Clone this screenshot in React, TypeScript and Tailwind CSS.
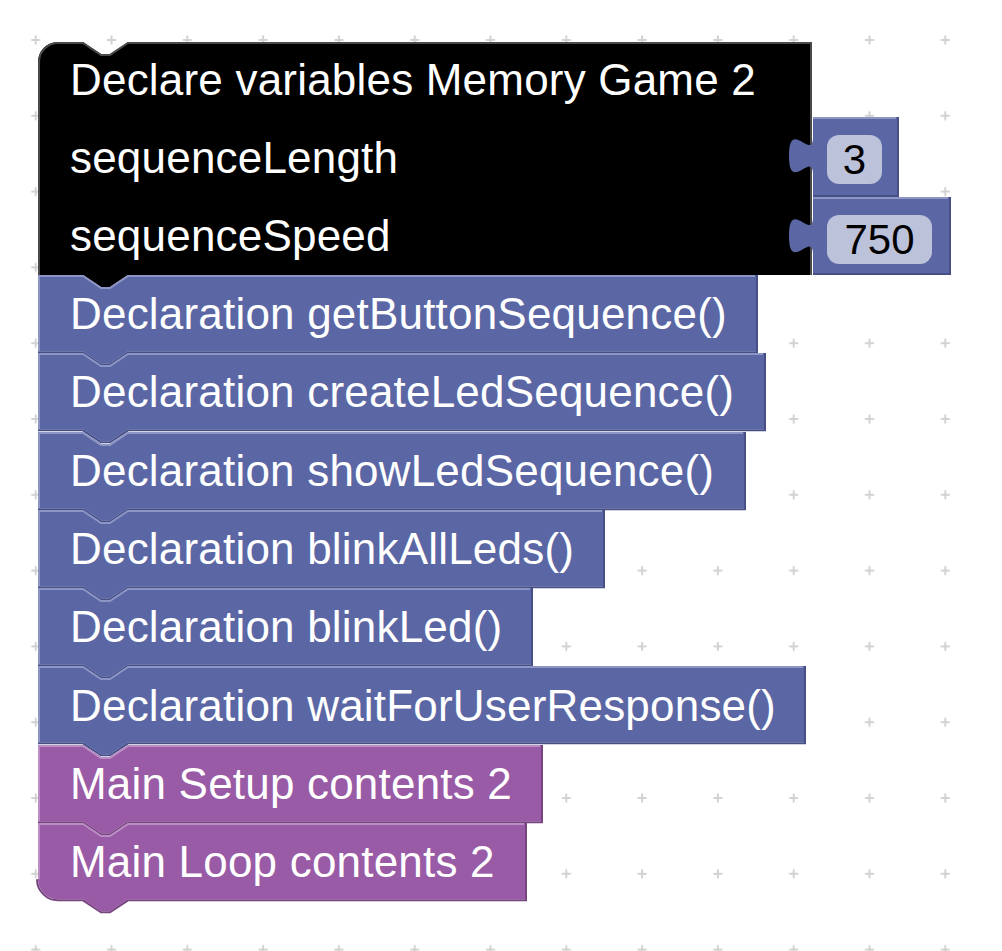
type Palette = { fill: string; light: string; dark: string };

const BLUE: Palette = { fill: "#5b67a5", light: "#8d95c4", dark: "#464f86" };
const PURPLE: Palette = { fill: "#995ba5", light: "#ba8ec4", dark: "#76447f" };

const NOTCH = "l18,12 9,0 18,-12";
const TAB = "l-18,12 -9,0 -18,-12";
const R = 20;

interface Stmt {
	label: string,
	w: number,
	cls: string,
	c: Palette,
	last?: boolean,
}

const stmts: Stmt[] = [
	{ label: "Declaration getButtonSequence()", w: 720, cls: "w-[720px]", c: BLUE },
	{ label: "Declaration createLedSequence()", w: 728, cls: "w-[728px]", c: BLUE },
	{ label: "Declaration showLedSequence()", w: 708, cls: "w-[708px]", c: BLUE },
	{ label: "Declaration blinkAllLeds()", w: 567, cls: "w-[567px]", c: BLUE },
	{ label: "Declaration blinkLed()", w: 495, cls: "w-[495px]", c: BLUE },
	{ label: "Declaration waitForUserResponse()", w: 768, cls: "w-[768px]", c: BLUE },
	{ label: "Main Setup contents 2", w: 505, cls: "w-[505px]", c: PURPLE },
	{ label: "Main Loop contents 2", w: 489, cls: "w-[489px]", c: PURPLE, last: true },
];

function StmtShape({ w, h, c, roundBottom }: { w: number, h: number, c: Palette, roundBottom?: boolean }) {
	const fw = w - 2;
	const fh = h - 2;
	const fill = `M0,0 H45 ${NOTCH} H${fw} V${fh} H90 ${TAB} ${roundBottom ? `H${R} A${R},${R} 0 0 1 0,${fh - R}` : "H0"} Z`;
	const dark = `M${fw + 1},0 V${fh + 1} H90 ${TAB} ${roundBottom ? `H${R} A${R + 1},${R + 1} 0 0 1 -1,${fh - R}` : "H0"}`;
	const light = `M1,${roundBottom ? fh - R : fh} V1 H45 ${NOTCH} H${fw - 1}`;
	return (
		<svg className="absolute left-0 top-0 overflow-visible" width={w} height={h}>
			<path d={dark} fill="none" stroke={c.dark} strokeWidth={2} />
			<path d={fill} fill={c.fill} />
			<path d={light} fill="none" stroke={c.light} strokeWidth={2} />
		</svg>
	);
}

function StmtBlock({ s }: { s: Stmt }) {
	return (
		<div className={`relative h-[78.3px] ${s.cls}`}>
			<StmtShape w={s.w} h={78.3} c={s.c} roundBottom={s.last} />
			<div className="relative flex h-full items-center pl-[32px] text-[44px] leading-none tracking-[0.2px] text-white whitespace-nowrap">
				{s.label}
			</div>
		</div>
	);
}

function VarsBlock() {
	const w = 774;
	const h = 233;
	const fill = `M0,${R} A${R},${R} 0 0 1 ${R},0 H45 ${NOTCH} H${w} V${h} H90 ${TAB} H0 Z`;
	const edge = `M1,${h} V${R} A${R - 1},${R - 1} 0 0 1 ${R},1 H45 ${NOTCH} H${w - 1} V${h}`;
	return (
		<div className="relative w-[774px] h-[233px]">
			<svg className="absolute left-0 top-0 overflow-visible" width={w} height={h}>
				<path d={fill} fill="#000" />
				<path d={edge} fill="none" stroke="#4a4a4a" strokeWidth={2} />
			</svg>
			<div className="relative flex flex-col pl-[32px] text-[44px] leading-none tracking-[0.2px] text-white whitespace-nowrap">
				<div className="flex h-[76px] items-center">Declare variables Memory Game 2</div>
				<div className="flex h-[79px] items-center">sequenceLength</div>
				<div className="flex h-[78px] items-center">sequenceSpeed</div>
			</div>
		</div>
	);
}

function ValueBlock({ w, h, cls, fieldCls, text }: { w: number, h: number, cls: string, fieldCls: string, text: string }) {
	const fw = w - 2;
	const fh = h - 2;
	const tab = "c0,-25 -24,20 -24,-18.75 s24,6.25 24,-18.75";
	const fill = `M0,0 H${fw} V${fh} H0 V57.5 ${tab} Z`;
	const dark = `M${fw + 1},0 V${fh + 1} H0`;
	const light = `M0,1 H${fw - 1}`;
	return (
		<div className={`relative ${cls}`}>
			<svg className="absolute left-0 top-0 overflow-visible" width={w} height={h}>
				<path d={dark} fill="none" stroke={BLUE.dark} strokeWidth={2} />
				<path d={fill} fill={BLUE.fill} />
				<path d={light} fill="none" stroke={BLUE.light} strokeWidth={2} />
			</svg>
			<div className="relative pl-[14px] pt-[18px]">
				<div className={`flex h-[49px] items-center justify-center rounded-[12px] bg-[#bdc2db] text-[42px] leading-none text-black ${fieldCls}`}>
					{text}
				</div>
			</div>
		</div>
	);
}

function Grid() {
	const s = 75.8;
	return (
		<svg className="absolute inset-0" width="1002" height="951">
			<defs>
				<pattern id="grid" patternUnits="userSpaceOnUse" width={s} height={s} x={35.7 - s / 2} y={40 - s / 2}>
					<path d={`M${s / 2 - 4.5},${s / 2} h9 M${s / 2},${s / 2 - 4.5} v9`} stroke="#d2d2d2" strokeWidth={2} />
				</pattern>
			</defs>
			<rect width="1002" height="951" fill="url(#grid)" />
		</svg>
	);
}

export default function App() {
	return (
		<div className="relative w-[1002px] h-[951px] overflow-hidden bg-white font-['Liberation_Sans',Arial,sans-serif]">
			<Grid />
			<div className="relative flex flex-col items-start pl-[38px] pt-[42px]">
				<div className="flex items-start">
					<VarsBlock />
					<div className="ml-px mt-[75px] flex flex-col">
						<ValueBlock w={86} h={80} cls="w-[86px] h-[80px]" fieldCls="w-[55px]" text="3" />
						<ValueBlock w={138} h={78} cls="w-[138px] h-[78px]" fieldCls="w-[105px]" text="750" />
					</div>
				</div>
				{stmts.map((s) => (
					<StmtBlock key={s.label} s={s} />
				))}
			</div>
		</div>
	);
}
